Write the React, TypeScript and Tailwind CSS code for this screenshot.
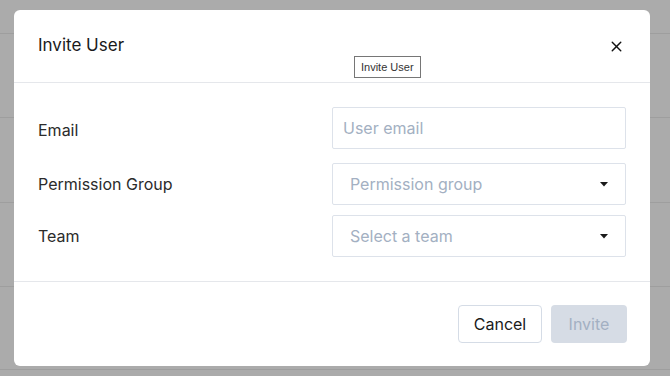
import { X } from 'lucide-react';

const Caret = () => (
  <svg width="10" height="6" viewBox="0 0 10 6" className="shrink-0">
    <path d="M1 1h8L5 5.5z" fill="#1a1a1a" />
  </svg>
);

interface SelectProps {
  placeholder: string;
}

const FakeSelect = ({ placeholder }: SelectProps) => (
  <div className="w-[295px] h-[42px] border border-[#dde2ea] rounded-[2px] flex items-center justify-between pl-[17px] pr-[16px] bg-white">
    <span className="text-[16px] text-[#a3b0c2]">{placeholder}</span>
    <Caret />
  </div>
);

const App = () => {
  return (
    <div className="relative w-full h-[376px] bg-[#ababab] overflow-hidden font-['Inter',sans-serif]">
      {/* page behind the overlay */}
      <div className="h-[34px] border-b border-[#9e9e9e]" />
      <div className="h-[84px] border-b border-[#9e9e9e]" />
      <div className="h-[85px] border-b border-[#9e9e9e]" />
      <div className="h-[84px] border-b border-[#9e9e9e]" />
      <div className="h-[83px] border-b border-[#9e9e9e]" />

      <div className="absolute left-[14px] top-[10px] w-[636px] h-[356px] bg-white rounded-[6px] flex flex-col">
        <div className="relative h-[73px] flex items-center justify-between pl-[24px] pr-[25px] border-b border-[#e5e7eb]">
          <span className="text-[17px] text-[#1a1a1a]">Invite User</span>
          <X size={17} strokeWidth={2} className="text-[#111]" />
          <div className="absolute left-[340px] top-[46px] h-[22px] px-[6px] flex items-center bg-white border border-[#767676] text-[11px] text-[#333] font-['Liberation_Sans',sans-serif]">
            Invite User
          </div>
        </div>

        <div className="flex-1 px-[24px] pt-[24px] text-[16px] text-[#2b2b2b]">
          <div className="flex items-center h-[42px]">
            <span className="w-[294px] pt-[3px]">Email</span>
            <div className="w-[295px] h-[42px] ml-[1px] border border-[#dde2ea] rounded-[2px] flex items-center px-[10px]">
              <span className="text-[#a3b0c2]">User email</span>
            </div>
          </div>
          <div className="flex items-center h-[42px] mt-[14px]">
            <span className="w-[295px]">Permission Group</span>
            <FakeSelect placeholder="Permission group" />
          </div>
          <div className="flex items-center h-[42px] mt-[10px]">
            <span className="w-[295px]">Team</span>
            <FakeSelect placeholder="Select a team" />
          </div>
        </div>

        <div className="h-[85px] border-t border-[#e5e7eb] flex items-start justify-end gap-[9px] pr-[23px] pt-[23px]">
          <button className="h-[38px] w-[84px] rounded-[4px] border border-[#d5dce6] bg-white text-[16px] text-[#1a1a1a]">
            Cancel
          </button>
          <button className="h-[38px] w-[76px] rounded-[4px] bg-[#d6dce5] text-[16px] text-[#a3b0c2]">
            Invite
          </button>
        </div>
      </div>
    </div>
  );
};

export default App;
